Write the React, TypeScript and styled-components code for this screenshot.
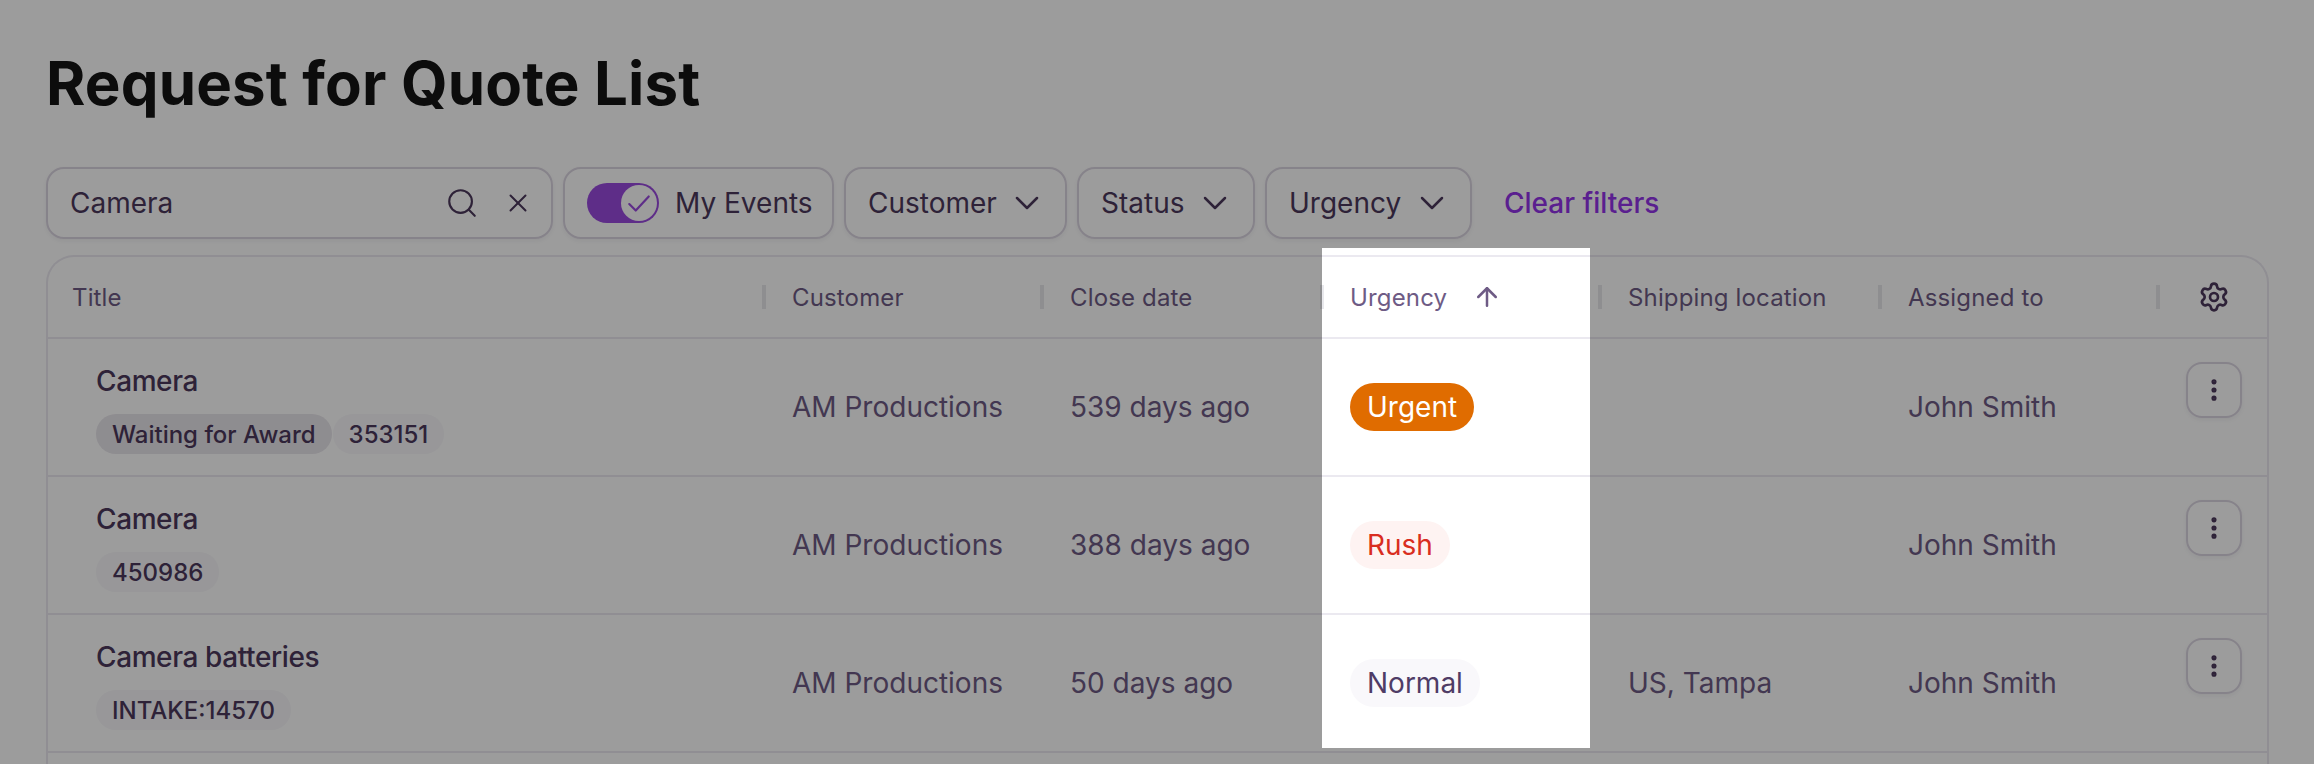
import React from "react";
import styled, { createGlobalStyle } from "styled-components";
import { ArrowUp, ChevronDown, EllipsisVertical, Search, Settings, X } from "lucide-react";

const Global = createGlobalStyle`
  html, body { margin: 0; padding: 0; background: #fff; }
  body { font-family: Inter, "Liberation Sans", sans-serif; }
`;

const Page = styled.div`
  position: relative;
  width: 2314px;
  height: 764px;
  overflow: hidden;
  box-sizing: border-box;
  padding: 47px 45px 0 46px;
  background: #fff;
`;

const Heading = styled.h1`
  margin: 0;
  height: 72px;
  font-size: 60px;
  line-height: 72px;
  font-weight: 700;
  letter-spacing: 0.15px;
  color: #141414;
`;

const Filters = styled.div`
  display: flex;
  align-items: center;
  gap: 10px;
  margin-top: 48px;
  height: 72px;
`;

const FilterBox = styled.div<{ $width: number }>`
  box-sizing: border-box;
  display: flex;
  align-items: center;
  justify-content: space-between;
  width: ${(p) => p.$width}px;
  height: 72px;
  padding: 0 22px;
  border: 2px solid #dcd6e2;
  border-radius: 18px;
  box-shadow: 0 2px 4px rgba(40, 30, 60, 0.06);
  font-size: 28px;
  white-space: nowrap;
  color: #4c385c;
`;

const SearchIcons = styled.div`
  display: flex;
  align-items: center;
  gap: 24px;
  color: #4c385c;
  margin-right: -4px;
`;

const ToggleBox = styled(FilterBox)`
  gap: 16px;
  justify-content: flex-start;
`;

const Toggle = styled.div`
  display: flex;
  justify-content: flex-end;
  align-items: center;
  box-sizing: border-box;
  width: 72px;
  height: 40px;
  padding: 2px;
  border-radius: 20px;
  background: #9a4adf;
  flex: none;
`;

const Thumb = styled.div`
  display: flex;
  align-items: center;
  justify-content: center;
  width: 36px;
  height: 36px;
  border-radius: 50%;
  background: #fff;
`;

const ClearLink = styled.a`
  margin-left: 22px;
  font-size: 28px;
  font-weight: 500;
  color: #9333ea;
`;

const Chevron = styled(ChevronDown)`
  margin-right: -4px;
`;

const Table = styled.div`
  box-sizing: border-box;
  margin-top: 16px;
  width: 2223px;
  height: 700px;
  border: 2px solid #ebe9f0;
  border-bottom: 0;
  border-radius: 28px 28px 0 0;
`;

const Row = styled.div<{ $height: number }>`
  display: grid;
  grid-template-columns: 714px 278px 280px 278px 280px 278px 1fr;
  height: ${(p) => p.$height}px;
  box-sizing: border-box;
  border-bottom: 2px solid #ebe9f0;
`;

const HeadCell = styled.div`
  display: flex;
  align-items: center;
  gap: 26px;
  font-size: 24px;
  letter-spacing: 0.15px;
  color: #6e5b85;
`;

const TitleHead = styled(HeadCell)`
  padding-left: 24px;
`;

const Divider = styled.span`
  width: 4px;
  height: 24px;
  background: #e8e8ec;
  flex: none;
`;

const GearSlot = styled.div`
  display: flex;
  justify-content: center;
  width: 55px;
  margin-left: auto;
  margin-right: 26px;
  color: #4c385c;
`;

const SortArrow = styled.span`
  display: flex;
  margin-left: -1px;
  color: #6e5b85;
`;

const TitleCell = styled.div`
  display: flex;
  flex-direction: column;
  justify-content: flex-start;
  gap: 16px;
  padding: 25px 0 0 48px;
`;

const RowTitle = styled.div`
  font-size: 28px;
  line-height: 34px;
  font-weight: 500;
  letter-spacing: -0.4px;
  color: #4c385c;
`;

const Chips = styled.div`
  display: flex;
  gap: 1px;
`;

const Chip = styled.span<{ $strong?: boolean }>`
  display: inline-flex;
  align-items: center;
  height: 40px;
  padding: 0 16px;
  border-radius: 20px;
  font-size: 24px;
  font-weight: 500;
  color: #4c385c;
  background: ${(p) => (p.$strong ? "#e9e6ec" : "#f8f7fa")};
`;

const Cell = styled.div`
  display: flex;
  align-items: center;
  padding-left: 30px;
  font-size: 28px;
  color: #6e5b85;
`;

const Badge = styled.span<{ $bg: string; $fg: string }>`
  display: inline-flex;
  align-items: center;
  height: 48px;
  padding: 0 17px;
  border-radius: 24px;
  font-size: 28px;
  font-weight: 400;
  background: ${(p) => p.$bg};
  color: ${(p) => p.$fg};
`;

const ActionCell = styled.div`
  display: flex;
  justify-content: flex-end;
  align-items: flex-start;
  padding: 23px 25px 0 0;
`;

const KebabButton = styled.button`
  display: flex;
  align-items: center;
  justify-content: center;
  box-sizing: border-box;
  width: 56px;
  height: 56px;
  padding: 0;
  background: transparent;
  border: 2px solid #dcd6e2;
  border-radius: 16px;
  box-shadow: 0 2px 4px rgba(40, 30, 60, 0.06);
  color: #4c385c;
`;

const Spotlight = styled.div`
  position: absolute;
  left: 1322px;
  top: 248px;
  width: 268px;
  height: 500px;
  box-shadow: 0 0 0 4000px rgba(0, 0, 0, 0.39);
  pointer-events: none;
`;

const urgency = {
  Urgent: { bg: "#e06c00", fg: "#ffffff" },
  Rush: { bg: "#fef3f2", fg: "#d92d20" },
  Normal: { bg: "#f9f8fb", fg: "#4f3c66" },
} as const;

const rows = [
  { title: "Camera", chips: [["Waiting for Award", true], ["353151", false]], close: "539 days ago", level: "Urgent", ship: "" },
  { title: "Camera", chips: [["450986", false]], close: "388 days ago", level: "Rush", ship: "" },
  { title: "Camera batteries", chips: [["INTAKE:14570", false]], close: "50 days ago", level: "Normal", ship: "US, Tampa" },
] as const;

export default function App() {
  return (
    <Page>
      <Global />
      <Heading>Request for Quote List</Heading>
      <Filters>
        <FilterBox $width={507}>
          <span>Camera</span>
          <SearchIcons>
            <Search size={34} strokeWidth={1.5} />
            <X size={30} strokeWidth={1.6} />
          </SearchIcons>
        </FilterBox>
        <ToggleBox $width={271}>
          <Toggle>
            <Thumb>
              <svg width="26" height="26" viewBox="0 0 24 24" fill="none" stroke="#9a4adf" strokeWidth="2" strokeLinecap="round" strokeLinejoin="round">
                <path d="M3 13l6 6L21 6" />
              </svg>
            </Thumb>
          </Toggle>
          <span>My Events</span>
        </ToggleBox>
        <FilterBox $width={223}>
          <span>Customer</span>
          <Chevron size={40} strokeWidth={1.5} />
        </FilterBox>
        <FilterBox $width={178}>
          <span>Status</span>
          <Chevron size={40} strokeWidth={1.5} />
        </FilterBox>
        <FilterBox $width={207}>
          <span>Urgency</span>
          <Chevron size={40} strokeWidth={1.5} />
        </FilterBox>
        <ClearLink>Clear filters</ClearLink>
      </Filters>
      <Table>
        <Row $height={82}>
          <TitleHead>Title</TitleHead>
          <HeadCell><Divider />Customer</HeadCell>
          <HeadCell><Divider />Close date</HeadCell>
          <HeadCell>
            <Divider />Urgency
            <SortArrow><ArrowUp size={30} strokeWidth={2} /></SortArrow>
          </HeadCell>
          <HeadCell><Divider />Shipping location</HeadCell>
          <HeadCell><Divider />Assigned to</HeadCell>
          <HeadCell>
            <Divider />
            <GearSlot><Settings size={32} strokeWidth={2} /></GearSlot>
          </HeadCell>
        </Row>
        {rows.map((r) => (
          <Row $height={138} key={r.title + r.close}>
            <TitleCell>
              <RowTitle>{r.title}</RowTitle>
              <Chips>
                {r.chips.map(([label, strong]) => (
                  <Chip key={label} $strong={strong}>{label}</Chip>
                ))}
              </Chips>
            </TitleCell>
            <Cell>AM Productions</Cell>
            <Cell>{r.close}</Cell>
            <Cell>
              <Badge $bg={urgency[r.level].bg} $fg={urgency[r.level].fg}>{r.level}</Badge>
            </Cell>
            <Cell>{r.ship}</Cell>
            <Cell>John Smith</Cell>
            <ActionCell>
              <KebabButton aria-label="More"><EllipsisVertical size={28} strokeWidth={2.4} /></KebabButton>
            </ActionCell>
          </Row>
        ))}
      </Table>
      <Spotlight />
    </Page>
  );
}
